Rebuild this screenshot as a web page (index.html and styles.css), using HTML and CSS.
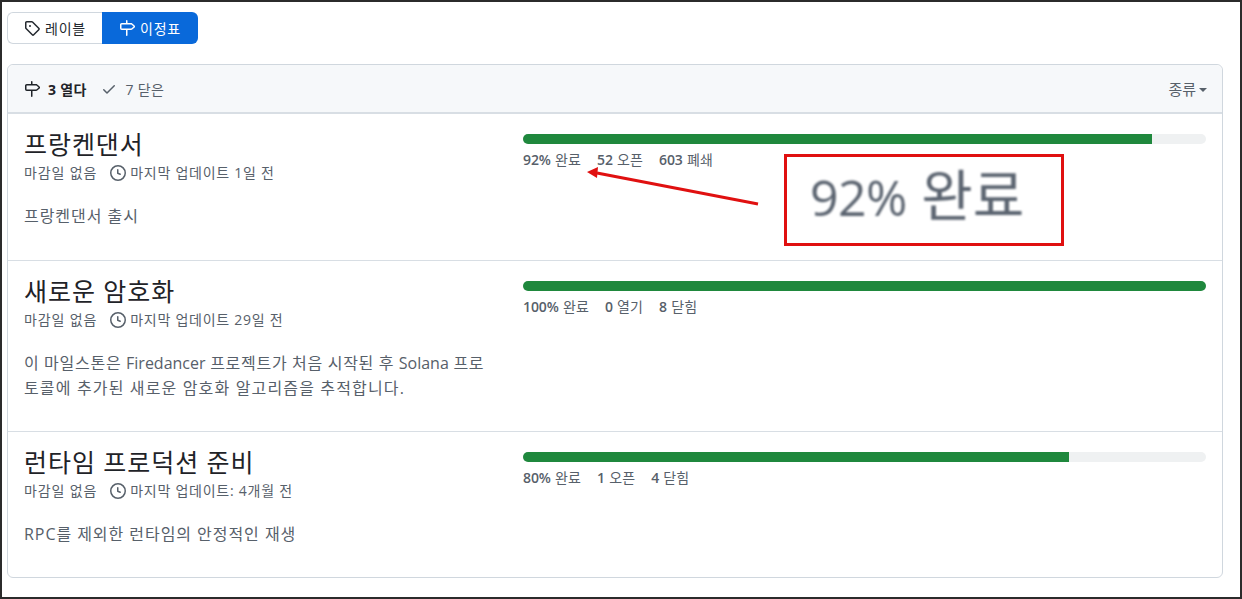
FILE: index.html
```html
<!DOCTYPE html>
<html lang="ko">
<head>
<meta charset="utf-8">
<title>이정표</title>
<link rel="stylesheet" href="styles.css">
</head>
<body>
<div class="frame">
  <nav class="tabs">
    <a class="tab tab-left">
      <svg class="icon" viewBox="0 0 16 16"><path d="M1 7.775V2.75C1 1.784 1.784 1 2.75 1h5.025c.464 0 .91.184 1.238.513l6.25 6.25a1.75 1.75 0 0 1 0 2.474l-5.026 5.026a1.75 1.75 0 0 1-2.474 0l-6.25-6.25A1.752 1.752 0 0 1 1 7.775Zm1.5 0c0 .066.026.13.073.177l6.25 6.25a.25.25 0 0 0 .354 0l5.025-5.025a.25.25 0 0 0 0-.354l-6.25-6.25a.25.25 0 0 0-.177-.073H2.75a.25.25 0 0 0-.25.25ZM6 5a1 1 0 1 1 0 2 1 1 0 0 1 0-2Z"/></svg>
      레이블
    </a>
    <a class="tab tab-right">
      <svg class="icon" viewBox="0 0 16 16"><path d="M7.75 0a.75.75 0 0 1 .75.75V3h3.634c.414 0 .814.147 1.13.414l2.07 1.75a1.75 1.75 0 0 1 0 2.672l-2.07 1.75a1.75 1.75 0 0 1-1.13.414H8.5v5.25a.75.75 0 0 1-1.5 0V10H2.75A1.75 1.75 0 0 1 1 8.25v-3.5C1 3.784 1.784 3 2.75 3H7V.75A.75.75 0 0 1 7.75 0Zm4.384 8.5a.25.25 0 0 0 .161-.06l2.07-1.75a.248.248 0 0 0 0-.38l-2.07-1.75a.25.25 0 0 0-.161-.06H2.75a.25.25 0 0 0-.25.25v3.5c0 .138.112.25.25.25Z"/></svg>
      이정표
    </a>
  </nav>

  <section class="box">
    <header class="box-head">
      <div class="states">
        <span class="state state-open">
          <svg class="icon" viewBox="0 0 16 16"><path d="M7.75 0a.75.75 0 0 1 .75.75V3h3.634c.414 0 .814.147 1.13.414l2.07 1.75a1.75 1.75 0 0 1 0 2.672l-2.07 1.75a1.75 1.75 0 0 1-1.13.414H8.5v5.25a.75.75 0 0 1-1.5 0V10H2.75A1.75 1.75 0 0 1 1 8.25v-3.5C1 3.784 1.784 3 2.75 3H7V.75A.75.75 0 0 1 7.75 0Zm4.384 8.5a.25.25 0 0 0 .161-.06l2.07-1.75a.248.248 0 0 0 0-.38l-2.07-1.75a.25.25 0 0 0-.161-.06H2.75a.25.25 0 0 0-.25.25v3.5c0 .138.112.25.25.25Z"/></svg>
          3 열다
        </span>
        <span class="state state-closed">
          <svg class="icon" viewBox="0 0 16 16"><path d="M13.78 4.22a.75.75 0 0 1 0 1.06l-7.25 7.25a.75.75 0 0 1-1.06 0L2.22 9.28a.751.751 0 0 1 .018-1.042.751.751 0 0 1 1.042-.018L6 10.94l6.72-6.72a.75.75 0 0 1 1.06 0Z"/></svg>
          7 닫은
        </span>
      </div>
      <span class="sort">종류<i class="caret"></i></span>
    </header>

    <article class="row row-a">
      <div class="info">
        <h2>프랑켄댄서</h2>
        <div class="meta">
          <span>마감일 없음</span>
          <span class="updated">
            <svg class="icon" viewBox="0 0 16 16"><path d="M8 0a8 8 0 1 1 0 16A8 8 0 0 1 8 0ZM1.5 8a6.5 6.5 0 1 0 13 0 6.5 6.5 0 0 0-13 0Zm7-3.25v2.992l2.028.812a.75.75 0 0 1-.557 1.392l-2.5-1A.751.751 0 0 1 7 8.25v-3.5a.75.75 0 0 1 1.5 0Z"/></svg>
            마지막 업데이트 1일 전
          </span>
        </div>
        <p class="desc">프랑켄댄서 출시</p>
      </div>
      <div class="progress">
        <div class="bar"><div class="fill" style="width:92.1%"></div></div>
        <div class="stats"><span><b>92%</b> 완료</span><span><b>52</b> 오픈</span><span><b>603</b> 폐쇄</span></div>
      </div>
    </article>

    <article class="row row-b">
      <div class="info">
        <h2>새로운 암호화</h2>
        <div class="meta">
          <span>마감일 없음</span>
          <span class="updated">
            <svg class="icon" viewBox="0 0 16 16"><path d="M8 0a8 8 0 1 1 0 16A8 8 0 0 1 8 0ZM1.5 8a6.5 6.5 0 1 0 13 0 6.5 6.5 0 0 0-13 0Zm7-3.25v2.992l2.028.812a.75.75 0 0 1-.557 1.392l-2.5-1A.751.751 0 0 1 7 8.25v-3.5a.75.75 0 0 1 1.5 0Z"/></svg>
            마지막 업데이트 29일 전
          </span>
        </div>
        <p class="desc">
          <span class="line line-first">이 마일스톤은 <span class="latin">Firedancer</span> 프로젝트가 처음 시작된 후 <span class="latin">Solana</span> 프로</span>
          <span class="line line-last">토콜에 추가된 새로운 암호화 알고리즘을 추적합니다.</span>
        </p>
      </div>
      <div class="progress">
        <div class="bar"><div class="fill" style="width:100%"></div></div>
        <div class="stats"><span><b>100%</b> 완료</span><span><b>0</b> 열기</span><span><b>8</b> 닫힘</span></div>
      </div>
    </article>

    <article class="row row-c">
      <div class="info">
        <h2>런타임 프로덕션 준비</h2>
        <div class="meta">
          <span>마감일 없음</span>
          <span class="updated">
            <svg class="icon" viewBox="0 0 16 16"><path d="M8 0a8 8 0 1 1 0 16A8 8 0 0 1 8 0ZM1.5 8a6.5 6.5 0 1 0 13 0 6.5 6.5 0 0 0-13 0Zm7-3.25v2.992l2.028.812a.75.75 0 0 1-.557 1.392l-2.5-1A.751.751 0 0 1 7 8.25v-3.5a.75.75 0 0 1 1.5 0Z"/></svg>
            마지막 업데이트: 4개월 전
          </span>
        </div>
        <p class="desc">RPC를 제외한 런타임의 안정적인 재생</p>
      </div>
      <div class="progress">
        <div class="bar"><div class="fill" style="width:80%"></div></div>
        <div class="stats"><span><b>80%</b> 완료</span><span><b>1</b> 오픈</span><span><b>4</b> 닫힘</span></div>
      </div>
    </article>
  </section>

  <div class="callout"><span class="callout-text"><span class="callout-num">92%</span> 완료</span></div>
  <svg class="arrow" viewBox="0 0 180 40"><path d="M171 38 10 7" class="arrow-line"/><path d="M0 6 11 1 10 12Z" class="arrow-head"/></svg>
</div>
</body>
</html>
```
FILE: styles.css
```css
* { box-sizing: border-box; }
html, body { margin: 0; height: 100%; background: #fff; }
body {
  font-family: "Open Sans", "Noto Sans CJK KR", sans-serif;
  color: #1f2328;
  overflow: hidden;
}
.frame {
  position: relative;
  width: 1242px;
  height: 599px;
  border: 2px solid #2b2b2b;
  padding: 10px 17px 0 5px;
}
.icon { width: 16px; height: 16px; fill: currentColor; flex: none; }

.tabs { display: flex; height: 32px; }
.tab {
  display: flex;
  align-items: center;
  gap: 5px;
  font-size: 14px;
  letter-spacing: .8px;
  height: 32px;
}
.tab-left {
  width: 95px;
  padding-left: 16px;
  border: 1px solid #d0d7de;
  border-right: 0;
  border-radius: 6px 0 0 6px;
  color: #24292f;
}
.tab-right {
  width: 96px;
  padding-left: 17px;
  background: #0969da;
  color: #fff;
  border-radius: 0 6px 6px 0;
}

.box {
  margin-top: 20px;
  width: 1216px;
  height: 514px;
  border: 1px solid #d0d7de;
  border-radius: 6px;
  display: flex;
  flex-direction: column;
}
.box-head {
  height: 49px;
  flex: none;
  display: flex;
  align-items: center;
  justify-content: space-between;
  padding: 0 15px 0 16px;
  background: #f6f8fa;
  border-bottom: 2px solid #d8dee4;
  border-radius: 6px 6px 0 0;
  font-size: 14px;
}
.states { display: flex; gap: 14px; }
.state { display: flex; align-items: center; gap: 7px; letter-spacing: .3px; }
.state-open { gap: 8px; font-weight: 700; color: #1f2328; }
.state-closed { gap: 9px; color: #57606a; }
.sort { display: flex; align-items: center; gap: 3px; color: #57606a; font-size: 15px; }
.caret {
  width: 0;
  height: 0;
  margin-top: 2px;
  border: 4px solid transparent;
  border-top-color: #57606a;
  border-bottom: 0;
}

.row {
  display: flex;
  padding: 16px 16px 0;
  border-bottom: 1px solid #d8dee4;
  flex: none;
}
.row-a { height: 147px; }
.row-b { height: 171px; }
.row-c { height: 145px; border-bottom: 0; }

.info { width: 499px; flex: none; }
h2 {
  margin: 0;
  font-size: 25px;
  letter-spacing: .95px;
  line-height: 28px;
  font-weight: 400;
  color: #1f2328;
}
.meta {
  display: flex;
  gap: 13px;
  font-size: 14px;
  letter-spacing: .85px;
  line-height: 20px;
  margin-top: 5px;
  color: #57606a;
}
.updated { display: flex; align-items: center; gap: 4px; letter-spacing: .75px; }
.desc {
  margin: 21px 0 0;
  font-size: 16px;
  letter-spacing: .95px;
  line-height: 25px;
  color: #57606a;
}
.line { display: block; white-space: nowrap; }
.line-first { letter-spacing: .75px; word-spacing: -.3px; }
.line-last { letter-spacing: 1.15px; }
.latin { letter-spacing: 0; }

.progress { flex: 1; padding-top: 4px; }
.bar { height: 10px; border-radius: 5px; background: #eff1f2; overflow: hidden; }
.fill { height: 100%; background: #1f883d; }
.stats {
  display: flex;
  gap: 16px;
  margin-top: 7px;
  font-size: 14px;
  letter-spacing: .1px;
  word-spacing: .5px;
  line-height: 18px;
  color: #57606a;
}
.stats b { font-weight: 600; letter-spacing: -.1px; }

.callout {
  position: absolute;
  left: 782px;
  top: 152px;
  width: 280px;
  height: 92px;
  border: 3px solid #e01010;
  background: #fff;
  display: flex;
  align-items: center;
  padding: 0 0 12px 23px;
}
.callout-text {
  font-size: 56px;
  line-height: 1;
  color: #5b6470;
  filter: blur(0.9px);
}
.callout-num { font-size: 50px; letter-spacing: -.6px; }
.arrow {
  position: absolute;
  left: 585px;
  top: 164px;
  width: 180px;
  height: 40px;
  overflow: visible;
}
.arrow-line { stroke: #e01010; stroke-width: 3; fill: none; }
.arrow-head { fill: #e01010; }
```
